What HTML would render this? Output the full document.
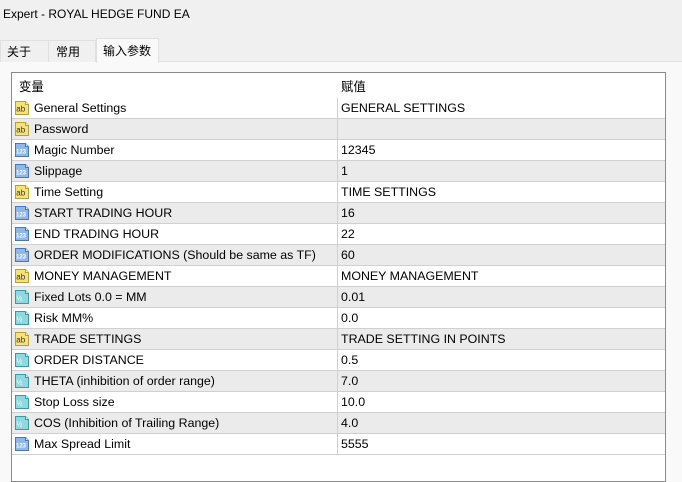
<!DOCTYPE html><html><head><meta charset="utf-8"><style>
*{margin:0;padding:0;box-sizing:border-box}
body{width:682px;height:474px;background:#f9f9f9;font-family:"Liberation Sans","Noto Sans CJK SC",sans-serif;font-size:12.4px;color:#000;position:relative;overflow:hidden}
.title{position:absolute;left:0;top:0;width:682px;height:62px;background:#f0f0f0;border-bottom:1px solid #e3e3e3}
.title span{position:absolute;left:3px;top:7px;font-size:12px}
.tab{position:absolute;top:40px;height:22px;background:#f0f0f0;border:1px solid #e0e0e0;border-bottom:none;font-size:12px;padding:2px 0 0 6px}
.tab.act{background:#f9f9f9;top:38px;height:25px;padding-top:3px}
.grid{position:absolute;left:11px;top:72px;width:655px;height:410px;background:#fff;border:1px solid #8a8a8a}
.row{position:absolute;left:0;width:653px;height:21px;border-bottom:1px solid #d0d0d0}
.row.g{background:#ebebeb}
.row .a{position:absolute;left:22px;top:3px;white-space:nowrap}
.row .b{position:absolute;left:329px;top:3px;white-space:nowrap}
.row .d{position:absolute;left:325px;top:0;width:1px;height:21px;background:#d0d0d0}
.row svg{position:absolute;left:2px;top:2px}
.hdr .a{left:7px}
</style></head><body>
<div class="title"><span>Expert - ROYAL HEDGE FUND EA</span></div>
<div class="tab" style="left:0;width:49px">关于</div>
<div class="tab" style="left:48px;width:48px;padding-left:7px">常用</div>
<div class="tab act" style="left:96px;width:63px">输入参数</div>
<svg width="0" height="0" style="position:absolute">
<defs>
<symbol id="ab" viewBox="0 0 16 16"><path d="M1.5 1.5h10l3 3v10h-13z" fill="#f6e27a" stroke="#b8a030"/><path d="M11.5 1.5v3h3" fill="#fff8c8" stroke="#b8a030"/><text x="2.3" y="11.5" font-size="8" font-family="Liberation Sans" fill="#333">ab</text></symbol>
<symbol id="n" viewBox="0 0 16 16"><path d="M1.5 1.5h10l3 3v10h-13z" fill="#8fb8e8" stroke="#4a78b8"/><path d="M11.5 1.5v3h3" fill="#dbe9fb" stroke="#4a78b8"/><text x="2" y="11.5" font-size="6" font-weight="bold" font-family="Liberation Sans" fill="#fff">123</text></symbol>
<symbol id="h" viewBox="0 0 16 16"><path d="M1.5 1.5h10l3 3v10h-13z" fill="#8fd8e0" stroke="#3a9aa8"/><path d="M11.5 1.5v3h3" fill="#dff6f8" stroke="#3a9aa8"/><text x="2.5" y="11.5" font-size="7" font-family="Liberation Sans" fill="#fff">½</text></symbol>
</defs></svg>
<div class="grid">
<div class="row hdr" style="top:1px;border:none;height:22px"><span class="a">变量</span><span class="b">赋值</span></div>
<div class="row" style="top:25px"><svg width="16" height="16"><use href="#ab"/></svg><span class="a">General Settings</span><span class="d"></span><span class="b">GENERAL SETTINGS</span></div>
<div class="row g" style="top:46px"><svg width="16" height="16"><use href="#ab"/></svg><span class="a">Password</span><span class="d"></span><span class="b"></span></div>
<div class="row" style="top:67px"><svg width="16" height="16"><use href="#n"/></svg><span class="a">Magic Number</span><span class="d"></span><span class="b">12345</span></div>
<div class="row g" style="top:88px"><svg width="16" height="16"><use href="#n"/></svg><span class="a">Slippage</span><span class="d"></span><span class="b">1</span></div>
<div class="row" style="top:109px"><svg width="16" height="16"><use href="#ab"/></svg><span class="a">Time Setting</span><span class="d"></span><span class="b">TIME SETTINGS</span></div>
<div class="row g" style="top:130px"><svg width="16" height="16"><use href="#n"/></svg><span class="a">START TRADING HOUR</span><span class="d"></span><span class="b">16</span></div>
<div class="row" style="top:151px"><svg width="16" height="16"><use href="#n"/></svg><span class="a">END TRADING HOUR</span><span class="d"></span><span class="b">22</span></div>
<div class="row g" style="top:172px"><svg width="16" height="16"><use href="#n"/></svg><span class="a">ORDER MODIFICATIONS (Should be same as TF)</span><span class="d"></span><span class="b">60</span></div>
<div class="row" style="top:193px"><svg width="16" height="16"><use href="#ab"/></svg><span class="a">MONEY MANAGEMENT</span><span class="d"></span><span class="b">MONEY MANAGEMENT</span></div>
<div class="row g" style="top:214px"><svg width="16" height="16"><use href="#h"/></svg><span class="a">Fixed Lots 0.0 = MM</span><span class="d"></span><span class="b">0.01</span></div>
<div class="row" style="top:235px"><svg width="16" height="16"><use href="#h"/></svg><span class="a">Risk MM%</span><span class="d"></span><span class="b">0.0</span></div>
<div class="row g" style="top:256px"><svg width="16" height="16"><use href="#ab"/></svg><span class="a">TRADE SETTINGS</span><span class="d"></span><span class="b">TRADE SETTING IN POINTS</span></div>
<div class="row" style="top:277px"><svg width="16" height="16"><use href="#h"/></svg><span class="a">ORDER DISTANCE</span><span class="d"></span><span class="b">0.5</span></div>
<div class="row g" style="top:298px"><svg width="16" height="16"><use href="#h"/></svg><span class="a">THETA (inhibition of order range)</span><span class="d"></span><span class="b">7.0</span></div>
<div class="row" style="top:319px"><svg width="16" height="16"><use href="#h"/></svg><span class="a">Stop Loss size</span><span class="d"></span><span class="b">10.0</span></div>
<div class="row g" style="top:340px"><svg width="16" height="16"><use href="#h"/></svg><span class="a">COS (Inhibition of Trailing Range)</span><span class="d"></span><span class="b">4.0</span></div>
<div class="row" style="top:361px"><svg width="16" height="16"><use href="#n"/></svg><span class="a">Max Spread Limit</span><span class="d"></span><span class="b">5555</span></div>
</div>
</body></html>
